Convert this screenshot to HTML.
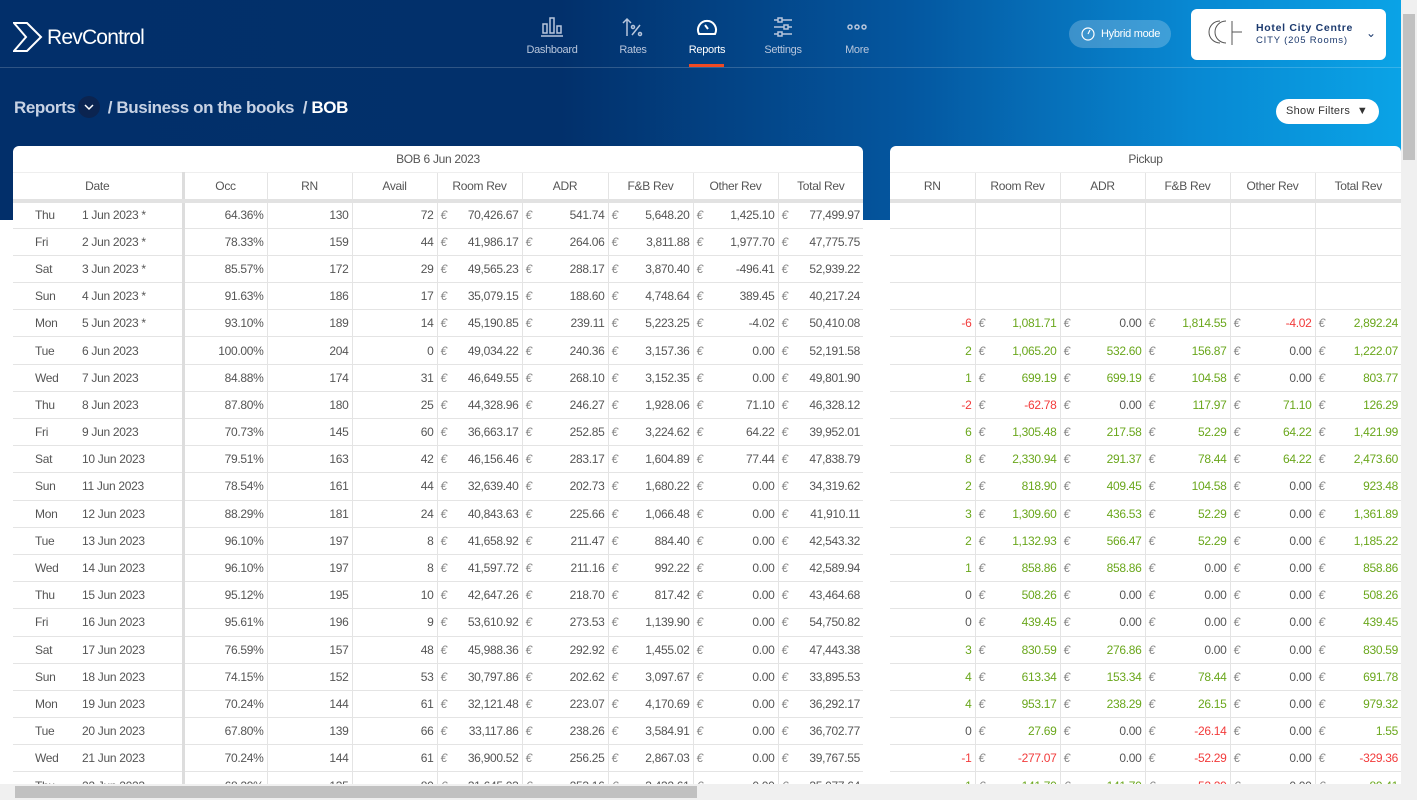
<!DOCTYPE html>
<html><head><meta charset="utf-8"><style>
*{box-sizing:border-box;margin:0;padding:0}
body{width:1417px;height:800px;overflow:hidden;background:#fff;font-family:"Liberation Sans",sans-serif;position:relative}
.bg{position:absolute;left:0;top:0;width:1401px;height:220px;background:linear-gradient(90deg,#022f6a 0%,#02306b 40%,#0457a0 65%,#0888d2 85%,#0aa3e6 100%)}
.navline{position:absolute;left:0;top:67px;width:1401px;height:1px;background:rgba(255,255,255,.18)}
.logo{position:absolute;left:13px;top:22px;color:#fff;font-size:21px;letter-spacing:-.8px}
.nav{position:absolute;top:16px;color:#b8c6dc;font-size:11px;text-align:center;width:70px;letter-spacing:-.3px}
.nav svg{display:block;margin:0 auto 6px}
.nav.act{color:#fff}
.ul{position:absolute;left:689px;top:64px;width:35px;height:3px;background:#f04a23}
.hyb{position:absolute;left:1069px;top:20px;width:102px;height:28px;border-radius:14px;background:rgba(255,255,255,.22);color:#fff;font-size:11px;line-height:28px;padding-left:32px;letter-spacing:-.3px}
.hotel{position:absolute;left:1191px;top:9px;width:195px;height:51px;background:#fff;border-radius:6px}
.bc{position:absolute;left:14px;top:96px;color:#c7d2e4;font-size:17px;font-weight:bold;letter-spacing:-.4px}
.bc b{color:#fff}
.dd{display:inline-block;width:22px;height:22px;border-radius:11px;background:#0b2450;vertical-align:-5px;margin:0 3px;position:relative}
.sf{position:absolute;left:1276px;top:99px;width:103px;height:25px;border-radius:13px;background:#fff;font-size:11px;color:#333;line-height:25px;padding-left:10px;letter-spacing:.3px}
.tw{position:absolute;top:146px;background:#fff;border-radius:6px 6px 0 0;overflow:hidden}
table{border-collapse:collapse;table-layout:fixed;font-size:12px;color:#555;letter-spacing:-.3px}
td{height:27.2px;border-right:1px solid #e4e4e4;border-bottom:1px solid #e4e4e4;text-align:right;padding:0 3px;white-space:nowrap}
td:last-child{border-right:0}
td .e{float:left;color:#888}
tr.t td{height:26px;text-align:center;font-size:12px;color:#555;border:0;border-bottom:1px solid #eee}
tr.h td{height:29px;text-align:center;color:#555;border-bottom:4px solid #e2e2e2}
td.dt{text-align:left;padding-left:22px;border-right:3px solid #ddd}
td.dt span{display:inline-block;width:47px}
.g{color:#6aa71c}.r{color:#f23b3b}
.vs{position:absolute;left:1401px;top:0;width:16px;height:800px;background:#f0f0f0}
.vs i{position:absolute;left:2px;top:14px;width:12px;height:146px;background:#c1c1c1}
.hs{position:absolute;left:0;top:784px;width:1401px;height:16px;background:#f0f0f0}
.hs i{position:absolute;left:15px;top:2px;width:682px;height:12px;background:#c1c1c1}
</style></head><body>
<div class="bg"></div><div class="navline"></div>
<div class="logo"><svg width="32" height="30" viewBox="0 0 32 30" style="vertical-align:-8px;margin-right:2px"><path d="M1 1h13l14 14-14 14H1l12-14z" fill="none" stroke="#fff" stroke-width="2"/></svg>RevControl</div>
<div class="nav" style="left:517px"><svg width="24" height="22" viewBox="0 0 24 22" fill="none" stroke="#b8c6dc" stroke-width="1.5"><rect x="3" y="8" width="4" height="9"/><rect x="10" y="2" width="4" height="15"/><rect x="17" y="10" width="4" height="7"/><path d="M1 20h22"/></svg>Dashboard</div>
<div class="nav" style="left:598px"><svg width="24" height="22" viewBox="0 0 24 22" fill="none" stroke="#b8c6dc" stroke-width="1.5"><path d="M6 20V3M2 7l4-4 4 4M11 19l8-10"/><circle cx="12" cy="11" r="1.5"/><circle cx="19" cy="18" r="1.5"/></svg>Rates</div>
<div class="nav act" style="left:672px"><svg width="24" height="22" viewBox="0 0 24 22" fill="none" stroke="#fff" stroke-width="2"><path d="M4 18a9 9 0 1 1 16 0z"/><path d="M10 9l3 4"/></svg>Reports</div>
<div class="nav" style="left:748px"><svg width="24" height="22" viewBox="0 0 24 22" fill="none" stroke="#b8c6dc" stroke-width="1.5"><path d="M3 4h4M11 4h10M3 11h10M17 11h4M3 18h4M11 18h10"/><rect x="7" y="2" width="4" height="4"/><rect x="13" y="9" width="4" height="4"/><rect x="7" y="16" width="4" height="4"/></svg>Settings</div>
<div class="nav" style="left:822px"><svg width="24" height="22" viewBox="0 0 24 22" fill="none" stroke="#b8c6dc" stroke-width="1.5"><circle cx="5" cy="11" r="2"/><circle cx="12" cy="11" r="2"/><circle cx="19" cy="11" r="2"/></svg>More</div>
<div class="ul"></div>
<div class="hyb"><svg width="14" height="14" viewBox="0 0 14 14" style="position:absolute;left:12px;top:7px" fill="none" stroke="#fff" stroke-width="1.2"><circle cx="7" cy="7" r="6"/><path d="M7 7l2-4"/></svg>Hybrid mode</div>
<div class="hotel"><svg width="42" height="32" viewBox="0 0 42 32" style="position:absolute;left:13px;top:9px" fill="none" stroke="#555" stroke-width="1"><path d="M16 3a11 11 0 1 0 0 22M22 3a11 11 0 1 0 0 22M28 3v24M28 14h10"/></svg><div style="position:absolute;left:65px;top:13px;font-size:10.5px;color:#1c3a6e;font-weight:bold;letter-spacing:.7px">Hotel City Centre</div><div style="position:absolute;left:65px;top:26px;font-size:9.5px;color:#1c3a6e;letter-spacing:.8px">CITY (205 Rooms)</div><div style="position:absolute;left:175px;top:17px;color:#1c3a6e;font-size:12px">&#8964;</div></div>
<div class="bc">Reports<span class="dd"><svg width="10" height="8" viewBox="0 0 10 8" style="position:absolute;left:6px;top:8px"><path d="M1 1l4 4 4-4" stroke="#fff" stroke-width="1.5" fill="none"/></svg></span> / Business on the books &nbsp;/ <b>BOB</b></div>
<div class="sf">Show Filters &nbsp;<span style="font-size:11px">&#9660;</span></div>

<div class="tw" style="left:13px;width:850px">
<table style="width:850px">
<colgroup><col style="width:170px"><col style="width:84px"><col style="width:85px"><col style="width:85px"><col style="width:85px"><col style="width:86px"><col style="width:85px"><col style="width:85px"><col style="width:85px"></colgroup>
<tr class="t"><td colspan="9">BOB 6 Jun 2023</td></tr>
<tr class="h"><td style="border-right:3px solid #ddd">Date</td><td>Occ</td><td>RN</td><td>Avail</td><td>Room Rev</td><td>ADR</td><td>F&amp;B Rev</td><td>Other Rev</td><td>Total Rev</td></tr>
<tr><td class="dt"><span>Thu</span>1 Jun 2023 *</td><td>64.36%</td><td>130</td><td>72</td><td><i class="e">€</i>70,426.67</td><td><i class="e">€</i>541.74</td><td><i class="e">€</i>5,648.20</td><td><i class="e">€</i>1,425.10</td><td><i class="e">€</i>77,499.97</td></tr>
<tr><td class="dt"><span>Fri</span>2 Jun 2023 *</td><td>78.33%</td><td>159</td><td>44</td><td><i class="e">€</i>41,986.17</td><td><i class="e">€</i>264.06</td><td><i class="e">€</i>3,811.88</td><td><i class="e">€</i>1,977.70</td><td><i class="e">€</i>47,775.75</td></tr>
<tr><td class="dt"><span>Sat</span>3 Jun 2023 *</td><td>85.57%</td><td>172</td><td>29</td><td><i class="e">€</i>49,565.23</td><td><i class="e">€</i>288.17</td><td><i class="e">€</i>3,870.40</td><td><i class="e">€</i>-496.41</td><td><i class="e">€</i>52,939.22</td></tr>
<tr><td class="dt"><span>Sun</span>4 Jun 2023 *</td><td>91.63%</td><td>186</td><td>17</td><td><i class="e">€</i>35,079.15</td><td><i class="e">€</i>188.60</td><td><i class="e">€</i>4,748.64</td><td><i class="e">€</i>389.45</td><td><i class="e">€</i>40,217.24</td></tr>
<tr><td class="dt"><span>Mon</span>5 Jun 2023 *</td><td>93.10%</td><td>189</td><td>14</td><td><i class="e">€</i>45,190.85</td><td><i class="e">€</i>239.11</td><td><i class="e">€</i>5,223.25</td><td><i class="e">€</i>-4.02</td><td><i class="e">€</i>50,410.08</td></tr>
<tr><td class="dt"><span>Tue</span>6 Jun 2023</td><td>100.00%</td><td>204</td><td>0</td><td><i class="e">€</i>49,034.22</td><td><i class="e">€</i>240.36</td><td><i class="e">€</i>3,157.36</td><td><i class="e">€</i>0.00</td><td><i class="e">€</i>52,191.58</td></tr>
<tr><td class="dt"><span>Wed</span>7 Jun 2023</td><td>84.88%</td><td>174</td><td>31</td><td><i class="e">€</i>46,649.55</td><td><i class="e">€</i>268.10</td><td><i class="e">€</i>3,152.35</td><td><i class="e">€</i>0.00</td><td><i class="e">€</i>49,801.90</td></tr>
<tr><td class="dt"><span>Thu</span>8 Jun 2023</td><td>87.80%</td><td>180</td><td>25</td><td><i class="e">€</i>44,328.96</td><td><i class="e">€</i>246.27</td><td><i class="e">€</i>1,928.06</td><td><i class="e">€</i>71.10</td><td><i class="e">€</i>46,328.12</td></tr>
<tr><td class="dt"><span>Fri</span>9 Jun 2023</td><td>70.73%</td><td>145</td><td>60</td><td><i class="e">€</i>36,663.17</td><td><i class="e">€</i>252.85</td><td><i class="e">€</i>3,224.62</td><td><i class="e">€</i>64.22</td><td><i class="e">€</i>39,952.01</td></tr>
<tr><td class="dt"><span>Sat</span>10 Jun 2023</td><td>79.51%</td><td>163</td><td>42</td><td><i class="e">€</i>46,156.46</td><td><i class="e">€</i>283.17</td><td><i class="e">€</i>1,604.89</td><td><i class="e">€</i>77.44</td><td><i class="e">€</i>47,838.79</td></tr>
<tr><td class="dt"><span>Sun</span>11 Jun 2023</td><td>78.54%</td><td>161</td><td>44</td><td><i class="e">€</i>32,639.40</td><td><i class="e">€</i>202.73</td><td><i class="e">€</i>1,680.22</td><td><i class="e">€</i>0.00</td><td><i class="e">€</i>34,319.62</td></tr>
<tr><td class="dt"><span>Mon</span>12 Jun 2023</td><td>88.29%</td><td>181</td><td>24</td><td><i class="e">€</i>40,843.63</td><td><i class="e">€</i>225.66</td><td><i class="e">€</i>1,066.48</td><td><i class="e">€</i>0.00</td><td><i class="e">€</i>41,910.11</td></tr>
<tr><td class="dt"><span>Tue</span>13 Jun 2023</td><td>96.10%</td><td>197</td><td>8</td><td><i class="e">€</i>41,658.92</td><td><i class="e">€</i>211.47</td><td><i class="e">€</i>884.40</td><td><i class="e">€</i>0.00</td><td><i class="e">€</i>42,543.32</td></tr>
<tr><td class="dt"><span>Wed</span>14 Jun 2023</td><td>96.10%</td><td>197</td><td>8</td><td><i class="e">€</i>41,597.72</td><td><i class="e">€</i>211.16</td><td><i class="e">€</i>992.22</td><td><i class="e">€</i>0.00</td><td><i class="e">€</i>42,589.94</td></tr>
<tr><td class="dt"><span>Thu</span>15 Jun 2023</td><td>95.12%</td><td>195</td><td>10</td><td><i class="e">€</i>42,647.26</td><td><i class="e">€</i>218.70</td><td><i class="e">€</i>817.42</td><td><i class="e">€</i>0.00</td><td><i class="e">€</i>43,464.68</td></tr>
<tr><td class="dt"><span>Fri</span>16 Jun 2023</td><td>95.61%</td><td>196</td><td>9</td><td><i class="e">€</i>53,610.92</td><td><i class="e">€</i>273.53</td><td><i class="e">€</i>1,139.90</td><td><i class="e">€</i>0.00</td><td><i class="e">€</i>54,750.82</td></tr>
<tr><td class="dt"><span>Sat</span>17 Jun 2023</td><td>76.59%</td><td>157</td><td>48</td><td><i class="e">€</i>45,988.36</td><td><i class="e">€</i>292.92</td><td><i class="e">€</i>1,455.02</td><td><i class="e">€</i>0.00</td><td><i class="e">€</i>47,443.38</td></tr>
<tr><td class="dt"><span>Sun</span>18 Jun 2023</td><td>74.15%</td><td>152</td><td>53</td><td><i class="e">€</i>30,797.86</td><td><i class="e">€</i>202.62</td><td><i class="e">€</i>3,097.67</td><td><i class="e">€</i>0.00</td><td><i class="e">€</i>33,895.53</td></tr>
<tr><td class="dt"><span>Mon</span>19 Jun 2023</td><td>70.24%</td><td>144</td><td>61</td><td><i class="e">€</i>32,121.48</td><td><i class="e">€</i>223.07</td><td><i class="e">€</i>4,170.69</td><td><i class="e">€</i>0.00</td><td><i class="e">€</i>36,292.17</td></tr>
<tr><td class="dt"><span>Tue</span>20 Jun 2023</td><td>67.80%</td><td>139</td><td>66</td><td><i class="e">€</i>33,117.86</td><td><i class="e">€</i>238.26</td><td><i class="e">€</i>3,584.91</td><td><i class="e">€</i>0.00</td><td><i class="e">€</i>36,702.77</td></tr>
<tr><td class="dt"><span>Wed</span>21 Jun 2023</td><td>70.24%</td><td>144</td><td>61</td><td><i class="e">€</i>36,900.52</td><td><i class="e">€</i>256.25</td><td><i class="e">€</i>2,867.03</td><td><i class="e">€</i>0.00</td><td><i class="e">€</i>39,767.55</td></tr>
<tr><td class="dt"><span>Thu</span>22 Jun 2023</td><td>68.29%</td><td>135</td><td>80</td><td><i class="e">€</i>31,645.03</td><td><i class="e">€</i>253.16</td><td><i class="e">€</i>3,432.61</td><td><i class="e">€</i>0.00</td><td><i class="e">€</i>35,077.64</td></tr>
</table></div>

<div class="tw" style="left:890px;width:511px">
<table style="width:511px">
<colgroup><col style="width:85px"><col style="width:85px"><col style="width:85px"><col style="width:85px"><col style="width:85px"><col style="width:86px"></colgroup>
<tr class="t"><td colspan="6">Pickup</td></tr>
<tr class="h"><td>RN</td><td>Room Rev</td><td>ADR</td><td>F&amp;B Rev</td><td>Other Rev</td><td>Total Rev</td></tr>
<tr><td></td><td></td><td></td><td></td><td></td><td></td></tr>
<tr><td></td><td></td><td></td><td></td><td></td><td></td></tr>
<tr><td></td><td></td><td></td><td></td><td></td><td></td></tr>
<tr><td></td><td></td><td></td><td></td><td></td><td></td></tr>
<tr><td class="r">-6</td><td class="g"><i class="e">€</i>1,081.71</td><td><i class="e">€</i>0.00</td><td class="g"><i class="e">€</i>1,814.55</td><td class="r"><i class="e">€</i>-4.02</td><td class="g"><i class="e">€</i>2,892.24</td></tr>
<tr><td class="g">2</td><td class="g"><i class="e">€</i>1,065.20</td><td class="g"><i class="e">€</i>532.60</td><td class="g"><i class="e">€</i>156.87</td><td><i class="e">€</i>0.00</td><td class="g"><i class="e">€</i>1,222.07</td></tr>
<tr><td class="g">1</td><td class="g"><i class="e">€</i>699.19</td><td class="g"><i class="e">€</i>699.19</td><td class="g"><i class="e">€</i>104.58</td><td><i class="e">€</i>0.00</td><td class="g"><i class="e">€</i>803.77</td></tr>
<tr><td class="r">-2</td><td class="r"><i class="e">€</i>-62.78</td><td><i class="e">€</i>0.00</td><td class="g"><i class="e">€</i>117.97</td><td class="g"><i class="e">€</i>71.10</td><td class="g"><i class="e">€</i>126.29</td></tr>
<tr><td class="g">6</td><td class="g"><i class="e">€</i>1,305.48</td><td class="g"><i class="e">€</i>217.58</td><td class="g"><i class="e">€</i>52.29</td><td class="g"><i class="e">€</i>64.22</td><td class="g"><i class="e">€</i>1,421.99</td></tr>
<tr><td class="g">8</td><td class="g"><i class="e">€</i>2,330.94</td><td class="g"><i class="e">€</i>291.37</td><td class="g"><i class="e">€</i>78.44</td><td class="g"><i class="e">€</i>64.22</td><td class="g"><i class="e">€</i>2,473.60</td></tr>
<tr><td class="g">2</td><td class="g"><i class="e">€</i>818.90</td><td class="g"><i class="e">€</i>409.45</td><td class="g"><i class="e">€</i>104.58</td><td><i class="e">€</i>0.00</td><td class="g"><i class="e">€</i>923.48</td></tr>
<tr><td class="g">3</td><td class="g"><i class="e">€</i>1,309.60</td><td class="g"><i class="e">€</i>436.53</td><td class="g"><i class="e">€</i>52.29</td><td><i class="e">€</i>0.00</td><td class="g"><i class="e">€</i>1,361.89</td></tr>
<tr><td class="g">2</td><td class="g"><i class="e">€</i>1,132.93</td><td class="g"><i class="e">€</i>566.47</td><td class="g"><i class="e">€</i>52.29</td><td><i class="e">€</i>0.00</td><td class="g"><i class="e">€</i>1,185.22</td></tr>
<tr><td class="g">1</td><td class="g"><i class="e">€</i>858.86</td><td class="g"><i class="e">€</i>858.86</td><td><i class="e">€</i>0.00</td><td><i class="e">€</i>0.00</td><td class="g"><i class="e">€</i>858.86</td></tr>
<tr><td>0</td><td class="g"><i class="e">€</i>508.26</td><td><i class="e">€</i>0.00</td><td><i class="e">€</i>0.00</td><td><i class="e">€</i>0.00</td><td class="g"><i class="e">€</i>508.26</td></tr>
<tr><td>0</td><td class="g"><i class="e">€</i>439.45</td><td><i class="e">€</i>0.00</td><td><i class="e">€</i>0.00</td><td><i class="e">€</i>0.00</td><td class="g"><i class="e">€</i>439.45</td></tr>
<tr><td class="g">3</td><td class="g"><i class="e">€</i>830.59</td><td class="g"><i class="e">€</i>276.86</td><td><i class="e">€</i>0.00</td><td><i class="e">€</i>0.00</td><td class="g"><i class="e">€</i>830.59</td></tr>
<tr><td class="g">4</td><td class="g"><i class="e">€</i>613.34</td><td class="g"><i class="e">€</i>153.34</td><td class="g"><i class="e">€</i>78.44</td><td><i class="e">€</i>0.00</td><td class="g"><i class="e">€</i>691.78</td></tr>
<tr><td class="g">4</td><td class="g"><i class="e">€</i>953.17</td><td class="g"><i class="e">€</i>238.29</td><td class="g"><i class="e">€</i>26.15</td><td><i class="e">€</i>0.00</td><td class="g"><i class="e">€</i>979.32</td></tr>
<tr><td>0</td><td class="g"><i class="e">€</i>27.69</td><td><i class="e">€</i>0.00</td><td class="r"><i class="e">€</i>-26.14</td><td><i class="e">€</i>0.00</td><td class="g"><i class="e">€</i>1.55</td></tr>
<tr><td class="r">-1</td><td class="r"><i class="e">€</i>-277.07</td><td><i class="e">€</i>0.00</td><td class="r"><i class="e">€</i>-52.29</td><td><i class="e">€</i>0.00</td><td class="r"><i class="e">€</i>-329.36</td></tr>
<tr><td class="g">1</td><td class="g"><i class="e">€</i>141.70</td><td class="g"><i class="e">€</i>141.70</td><td class="r"><i class="e">€</i>-52.29</td><td><i class="e">€</i>0.00</td><td class="g"><i class="e">€</i>89.41</td></tr>
</table></div>
<div class="vs"><i></i></div>
<div class="hs"><i></i></div>
</body></html>
